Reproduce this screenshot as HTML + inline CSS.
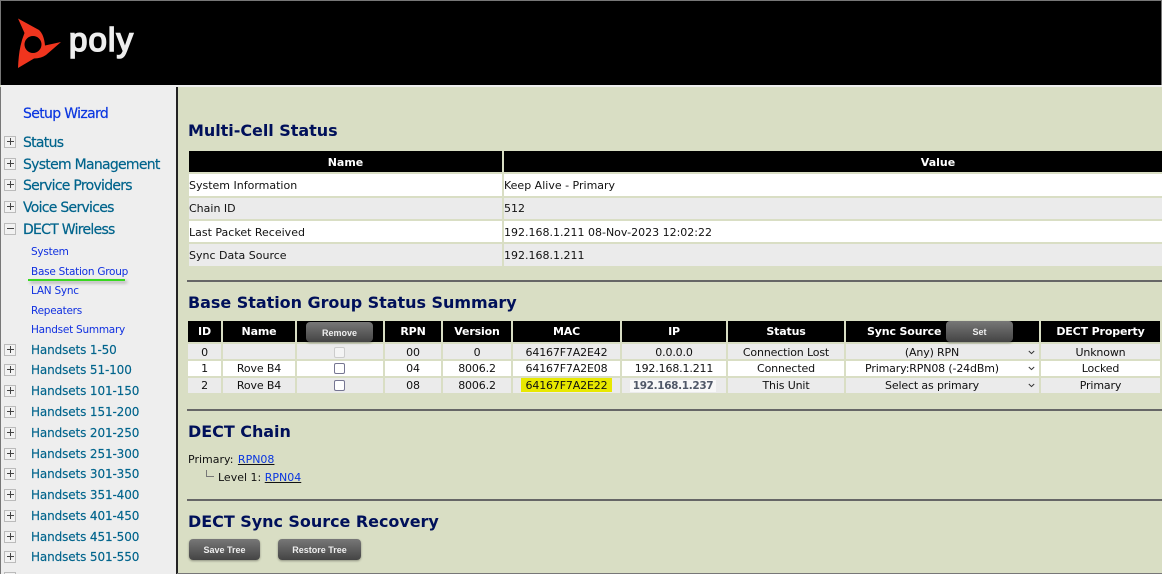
<!DOCTYPE html>
<html><head><meta charset="utf-8"><style>
html,body{margin:0;padding:0;width:1162px;height:574px;overflow:hidden}
#root{position:absolute;left:0;top:0;width:1162px;height:574px;overflow:hidden;background:#d9dec4;font-family:"DejaVu Sans",Verdana,sans-serif;font-size:11px;color:#111}
.a{position:absolute;white-space:nowrap}
#hd{left:0;top:0;width:1162px;height:85px;background:#000;box-sizing:border-box;border:1px solid #777;border-bottom:0}
#sb{left:0;top:87px;width:176px;height:487px;background:#eee;border-left:1px solid #777;box-sizing:border-box}
#sl{left:176px;top:87px;width:2px;height:487px;background:#222}
#wl{left:1px;top:85px;width:1161px;height:2px;background:#eee}
.m{left:23px;font-size:14px;letter-spacing:-.72px;line-height:18px;height:18px;color:#00648c;-webkit-text-stroke:.2px currentColor}
.s{left:31px;font-size:10.5px;letter-spacing:-.25px;line-height:14px;height:14px;color:#1030e0}
.h{left:31px;font-size:12px;letter-spacing:-.12px;line-height:16px;height:16px;color:#00648c;-webkit-text-stroke:.15px currentColor}
.i{left:4px;width:10px;height:10px;border:1px solid #bbb;background:#f2f2f2}
.i:before{content:"";position:absolute;left:2px;top:4px;width:7px;height:1px;background:#444}
.i.p:after{content:"";position:absolute;left:5px;top:1px;width:1px;height:7px;background:#444}
h2{position:absolute;margin:0;left:188px;font-size:16px;letter-spacing:-.04px;line-height:20px;color:#00105a;white-space:nowrap;font-weight:bold}
table{position:absolute;border-collapse:separate;border-spacing:2px;table-layout:fixed}
td,th{padding:0;overflow:hidden;white-space:nowrap;font-size:11px}
th{background:#000;color:#fff;font-weight:bold;text-align:center}
.t1 th{padding-top:1px}
.t2 th{letter-spacing:-.15px}
.w td{background:#fff}.g td{background:#ebebeb}
.t2 td{text-align:center;line-height:12px;padding-top:2px;vertical-align:top;font-size:11px;letter-spacing:-.15px}
.t2 tr.r0 td{padding-top:3px}
.hr{left:187px;width:975px;height:2px;background:#666}
.b{position:absolute;box-sizing:border-box;border-radius:4px;background:linear-gradient(#777,#444);color:#eee;font-family:"Liberation Sans",sans-serif;font-size:9px;font-weight:bold;text-align:center;box-shadow:0 1px 2px rgba(0,0,0,.35);line-height:22px}
.cb{display:block;box-sizing:border-box;width:11px;height:11px;margin:0 0 0 37px;border:1px solid #767692;border-radius:2px;background:#fff}
.cb.d{border-color:#ccc;background:#f4f4f4;margin-top:0}
.c{position:absolute;right:4px;top:3px}
.sel{position:relative;display:block;height:12px;padding-right:21px}
a{color:#0a36e0;text-decoration:underline;text-decoration-color:#111}
</style></head><body><div id="root">
<div class="a" id="hd"></div>
<svg class="a" style="left:0;top:0" width="150" height="85" viewBox="0 0 150 85">
<path fill-rule="evenodd" fill="#f0351e" d="M18 18.5 L39 30 Q44 34.5 45 45.5 L61 42 L46 55 Q41 58.5 34 58.5 L18 68 Q18.5 55 20.5 46 Q22 39 24.5 33 Z M33 36 A8.5 8.5 0 1 0 33 53 A8.5 8.5 0 1 0 33 36 Z"/>
<text x="69" y="51" font-family="Liberation Sans, sans-serif" font-size="33" fill="#eee" stroke="#eee" stroke-width="1.6" textLength="64">poly</text>
</svg>
<div class="a" id="wl"></div><div class="a" id="sb"></div><div class="a" id="sl"></div>

<div class="a m" style="top:105px;color:#0a36e0;letter-spacing:-.65px">Setup Wizard</div>
<div class="a i p" style="top:136px"></div><div class="a m" style="top:134px">Status</div>
<div class="a i p" style="top:158px"></div><div class="a m" style="top:156px">System Management</div>
<div class="a i p" style="top:179px"></div><div class="a m" style="top:177px">Service Providers</div>
<div class="a i p" style="top:201px"></div><div class="a m" style="top:199px">Voice Services</div>
<div class="a i" style="top:223px"></div><div class="a m" style="top:221px">DECT Wireless</div>
<div class="a s" style="top:245px">System</div>
<div class="a s" style="top:265px">Base Station Group</div>
<div class="a" style="left:28px;top:279px;width:97px;height:2px;background:#38d820;box-shadow:2px 2px 3px rgba(0,0,0,.35)"></div>
<div class="a s" style="top:284px">LAN Sync</div>
<div class="a s" style="top:304px">Repeaters</div>
<div class="a s" style="top:323px">Handset Summary</div>
<div class="a i p" style="top:344px"></div><div class="a h" style="top:342px">Handsets 1-50</div>
<div class="a i p" style="top:364px"></div><div class="a h" style="top:362px">Handsets 51-100</div>
<div class="a i p" style="top:385px"></div><div class="a h" style="top:383px">Handsets 101-150</div>
<div class="a i p" style="top:406px"></div><div class="a h" style="top:404px">Handsets 151-200</div>
<div class="a i p" style="top:427px"></div><div class="a h" style="top:425px">Handsets 201-250</div>
<div class="a i p" style="top:448px"></div><div class="a h" style="top:446px">Handsets 251-300</div>
<div class="a i p" style="top:468px"></div><div class="a h" style="top:466px">Handsets 301-350</div>
<div class="a i p" style="top:489px"></div><div class="a h" style="top:487px">Handsets 351-400</div>
<div class="a i p" style="top:510px"></div><div class="a h" style="top:508px">Handsets 401-450</div>
<div class="a i p" style="top:531px"></div><div class="a h" style="top:529px">Handsets 451-500</div>
<div class="a i p" style="top:551px"></div><div class="a h" style="top:549px">Handsets 501-550</div>

<h2 style="top:121px">Multi-Cell Status</h2>
<table class="t1" style="left:187px;top:149px;width:1187px">
<colgroup><col style="width:313px"><col style="width:868px"></colgroup>
<tr style="height:21px"><th>Name</th><th>Value</th></tr>
<tr class="w" style="height:22px"><td>System Information</td><td>Keep Alive - Primary</td></tr>
<tr class="g" style="height:21px"><td>Chain ID</td><td>512</td></tr>
<tr class="w" style="height:21px"><td style="padding-top:2px">Last Packet Received</td><td style="padding-top:2px">192.168.1.211 08-Nov-2023 12:02:22</td></tr>
<tr class="g" style="height:22px"><td>Sync Data Source</td><td>192.168.1.211</td></tr>
</table>
<div class="a hr" style="top:280px"></div>

<h2 style="top:293px">Base Station Group Status Summary</h2>
<table class="t2" style="left:186px;top:319px;width:976px">
<colgroup><col style="width:33px"><col style="width:72px"><col style="width:86px"><col style="width:56px"><col style="width:68px"><col style="width:107px"><col style="width:104px"><col style="width:116px"><col style="width:193px"><col style="width:119px"></colgroup>
<tr style="height:21px"><th>ID</th><th>Name</th><th></th><th>RPN</th><th>Version</th><th>MAC</th><th>IP</th><th>Status</th><th style="text-align:left;padding-left:21px">Sync Source</th><th>DECT Property</th></tr>
<tr class="g r0" style="height:15px"><td>0</td><td></td><td><span class="cb d"></span></td><td>00</td><td>0</td><td>64167F7A2E42</td><td>0.0.0.0</td><td>Connection Lost</td><td><span class="sel">(Any) RPN<svg class="c" width="7" height="5" viewBox="0 0 7 5"><path d="M.8 1l2.7 2.6L6.2 1" fill="none" stroke="#333" stroke-width="1"/></svg></span></td><td>Unknown</td></tr>
<tr class="w" style="height:15px"><td>1</td><td>Rove B4</td><td><span class="cb"></span></td><td>04</td><td>8006.2</td><td>64167F7A2E08</td><td>192.168.1.211</td><td>Connected</td><td><span class="sel">Primary:RPN08 (-24dBm)<svg class="c" width="7" height="5" viewBox="0 0 7 5"><path d="M.8 1l2.7 2.6L6.2 1" fill="none" stroke="#333" stroke-width="1"/></svg></span></td><td>Locked</td></tr>
<tr class="g" style="height:15px"><td>2</td><td>Rove B4</td><td><span class="cb"></span></td><td>08</td><td>8006.2</td><td></td><td></td><td>This Unit</td><td><span class="sel">Select as primary<svg class="c" width="7" height="5" viewBox="0 0 7 5"><path d="M.8 1l2.7 2.6L6.2 1" fill="none" stroke="#333" stroke-width="1"/></svg></span></td><td>Primary</td></tr>
</table>
<div class="a" style="left:521px;top:378px;width:91px;height:14px;line-height:15px;background:#e8e800;text-align:center;font-size:11px;letter-spacing:-.15px">64167F7A2E22</div>
<div class="a" style="left:630px;top:380px;width:86px;height:12px;line-height:13px;background:#f8f8f8;text-align:center;font-size:10.5px;color:#505868;font-weight:bold;letter-spacing:-.35px">192.168.1.237</div>
<div class="b" style="left:306px;top:322px;width:67px;height:20px">Remove</div>
<div class="b" style="left:946px;top:321px;width:67px;height:21px">Set</div>
<div class="a hr" style="top:409px"></div>

<h2 style="top:422px">DECT Chain</h2>
<div class="a" style="left:188px;top:453px;line-height:14px">Primary: <a style="margin-left:1px">RPN08</a></div>
<div class="a" style="left:206px;top:470px;width:7px;height:6px;border-left:1px solid #777;border-bottom:1px solid #777"></div>
<div class="a" style="left:218px;top:471px;line-height:14px">Level 1: <a>RPN04</a></div>
<div class="a hr" style="top:499px"></div>

<h2 style="top:512px">DECT Sync Source Recovery</h2>
<div class="b" style="left:189px;top:539px;width:71px;height:21px">Save Tree</div>
<div class="b" style="left:278px;top:539px;width:83px;height:21px">Restore Tree</div>
<div class="a" style="left:177px;top:573px;width:985px;height:1px;background:#777"></div>
<div class="a i" style="top:572px"></div>
</div></body></html>
